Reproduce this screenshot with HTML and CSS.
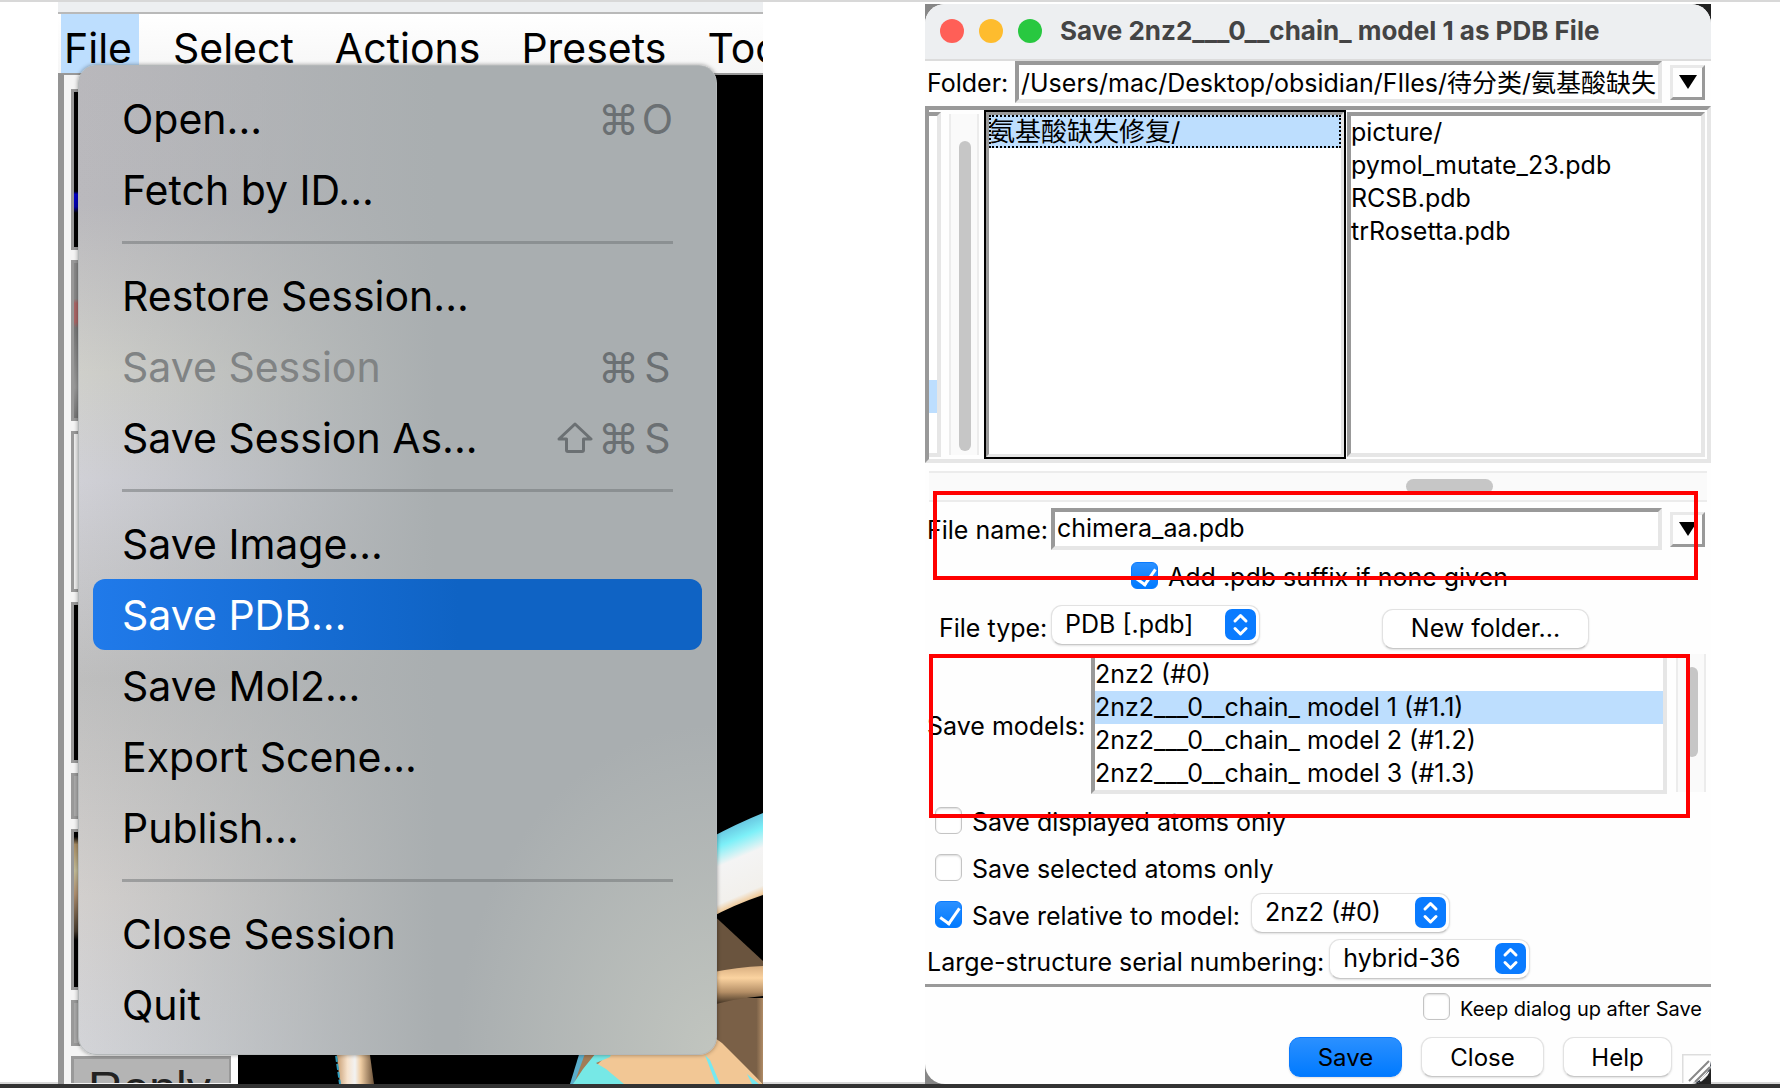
FILE: index.html
```html
<!DOCTYPE html>
<html lang="en">
<head>
<meta charset="utf-8">
<title>Save PDB</title>
<link rel="stylesheet" href="styles.css">
</head>
<body>
<main class="board">
  <section class="viewer">
    <div class="viewer-title"></div>
    <nav class="menubar">
      <button class="menubar-item is-open" type="button">File</button>
      <button class="menubar-item" type="button">Select</button>
      <button class="menubar-item" type="button">Actions</button>
      <button class="menubar-item" type="button">Presets</button>
      <button class="menubar-item" type="button">Tools</button>
    </nav>
    <div class="viewer-body">
      <div class="thumbs">
        <div class="thumb tall dark dot-blue"></div>
        <div class="thumb tall grey"></div>
        <div class="thumb tall pale"></div>
        <div class="thumb tall dark"></div>
        <div class="thumb short"></div>
        <div class="thumb tall bone"></div>
        <div class="thumb short"></div>
        <div class="thumb reply">Reply</div>
      </div>
      <div class="viewport">
        <svg viewBox="0 0 525 1011" preserveAspectRatio="xMaxYMax slice" aria-hidden="true">
          <defs>
            <linearGradient id="ribbon" gradientUnits="userSpaceOnUse" x1="480" y1="752" x2="516" y2="836">
              <stop offset="0" stop-color="#5fb4d6"/><stop offset=".22" stop-color="#7df0f8"/>
              <stop offset=".42" stop-color="#f4f4f4"/><stop offset=".8" stop-color="#f2f0ec"/>
              <stop offset=".88" stop-color="#f0cda0"/><stop offset="1" stop-color="#4a3a28"/>
            </linearGradient>
            <linearGradient id="strand" x1="0" y1="0" x2="0" y2="1">
              <stop offset="0" stop-color="#d8ae80"/><stop offset=".3" stop-color="#fbd3a0"/>
              <stop offset=".65" stop-color="#b58f66"/><stop offset="1" stop-color="#2e2318"/>
            </linearGradient>
            <linearGradient id="stick" x1="0" y1="0" x2="1" y2="0">
              <stop offset="0" stop-color="#c29669"/><stop offset=".3" stop-color="#f6e2cc"/>
              <stop offset=".5" stop-color="#f2f2f2"/><stop offset=".65" stop-color="#efcda3"/>
              <stop offset="1" stop-color="#6d533a"/>
            </linearGradient>
            <linearGradient id="fold" x1="0" y1="0" x2="1" y2="0">
              <stop offset=".88" stop-color="#7a6047"/><stop offset="1" stop-color="#b08c66"/>
            </linearGradient>
          </defs>
          <rect width="525" height="1011" fill="#000"/>
          <path d="M470 766Q500 750 525 740V822Q495 832 470 846Z" fill="url(#ribbon)"/>
          <path d="M470 837L525 888V911H470Z" fill="#6a543e"/>
          <path d="M470 925H525V1011L470 958Z" fill="url(#fold)"/>
          <path d="M470 900Q500 894 525 893V923Q500 925 470 933Z" fill="url(#strand)"/>
          <path d="M346 975H470V960L484 970L525 1011H334Z" fill="#f2c795"/>
          <path d="M344 975H376L346 1005L334 1011Z" fill="#a27b55"/>
          <path d="M343 975H349L336 1011H332Z" fill="#5aaecb"/>
          <path d="M362 975H375L372 984L358 990L368 996L386 1011H335L345 996Z" fill="#76e8e6"/>
          <path d="M467 982L472 987L482 1011H478Z M509 1001L521 1011H514Z" fill="#76e8f0"/>
          <path d="M98 975H131L136 1011H102Z" fill="url(#stick)"/>
          <path d="M97 975L102 1011" stroke="#2f9fc0" stroke-width="2" stroke-dasharray="6 2"/>
        </svg>
      </div>
    </div>
    <div class="popup" role="menu">
      <button class="item" role="menuitem" type="button"><span>Open...</span><kbd><i>⌘</i><i>O</i></kbd></button>
      <button class="item" role="menuitem" type="button"><span>Fetch by ID...</span></button>
      <hr>
      <button class="item" role="menuitem" type="button"><span>Restore Session...</span></button>
      <button class="item" role="menuitem" type="button" disabled><span>Save Session</span><kbd><i>⌘</i><i>S</i></kbd></button>
      <button class="item" role="menuitem" type="button"><span>Save Session As...</span><kbd><svg class="shift" viewBox="0 0 36 32" role="img" aria-label="Shift"><path d="M18 2L34 17H26.500V28Q26.500 29.500 25 29.500H11Q9.500 29.500 9.500 28V17H2Z"/></svg><i>⌘</i><i>S</i></kbd></button>
      <hr>
      <button class="item" role="menuitem" type="button"><span>Save Image...</span></button>
      <button class="item is-active" role="menuitem" type="button"><span>Save PDB...</span></button>
      <button class="item" role="menuitem" type="button"><span>Save Mol2...</span></button>
      <button class="item" role="menuitem" type="button"><span>Export Scene...</span></button>
      <button class="item" role="menuitem" type="button"><span>Publish...</span></button>
      <hr>
      <button class="item" role="menuitem" type="button"><span>Close Session</span></button>
      <button class="item" role="menuitem" type="button"><span>Quit</span></button>
    </div>
  </section>

  <section class="backdrop">
    <form class="dialog">
      <header class="titlebar">
        <span class="light red"></span><span class="light amber"></span><span class="light green"></span>
        <h1>Save 2nz2___0__chain_ model 1 as PDB File</h1>
      </header>

      <div class="entry-row folder-row">
        <label for="folder">Folder:</label>
        <input id="folder" class="entry" type="text" value="/Users/mac/Desktop/obsidian/FIles/待分类/氨基酸缺失">
        <button class="drop" type="button" aria-label="Recent folders"><svg viewBox="0 0 18 14"><path d="M0 0H18L9 14Z"/></svg></button>
      </div>

      <div class="browser">
        <div class="pane parent"><div class="parent-row"></div></div>
        <div class="vscroll"><div class="thumb-bar"></div></div>
        <ul class="pane current"><li class="focus-row">氨基酸缺失修复/</li></ul>
        <ul class="pane files"><li>picture/</li><li>pymol_mutate_23.pdb</li><li>RCSB.pdb</li><li>trRosetta.pdb</li></ul>
      </div>
      <div class="hscroll"><div class="thumb-bar"></div></div>

      <div class="entry-row name-row">
        <label for="name">File name:</label>
        <input id="name" class="entry" type="text" value="chimera_aa.pdb">
        <button class="drop" type="button" aria-label="Recent names"><svg viewBox="0 0 18 14"><path d="M0 0H18L9 14Z"/></svg></button>
      </div>

      <label class="check suffix"><input type="checkbox" checked>Add .pdb suffix if none given</label>

      <div class="type-row">
        <label for="type">File type:</label>
        <span class="combo w-type"><select id="type"><option>PDB [.pdb]</option></select>
          <svg viewBox="0 0 31 31"><rect width="31" height="31" rx="7" fill="#0a7bff"/><path d="M10 12L15.500 6.500L21 12M10 19.500L15.500 25L21 19.500"/></svg></span>
        <button class="push new-folder" type="button">New folder...</button>
      </div>

      <div class="models-row">
        <span id="models-label">Save models:</span>
        <ul class="models" aria-labelledby="models-label">
          <li>2nz2 (#0)</li>
          <li class="selected">2nz2___0__chain_ model 1 (#1.1)</li>
          <li>2nz2___0__chain_ model 2 (#1.2)</li>
          <li>2nz2___0__chain_ model 3 (#1.3)</li>
        </ul>
        <div class="vscroll"><div class="thumb-bar"></div></div>
      </div>

      <div class="options">
        <label class="check"><input type="checkbox">Save displayed atoms only</label>
        <label class="check"><input type="checkbox">Save selected atoms only</label>
        <div class="option-line">
          <label class="check"><input type="checkbox" checked>Save relative to model:</label>
          <span class="combo w-model"><select aria-label="Relative model"><option>2nz2 (#0)</option></select>
            <svg viewBox="0 0 31 31"><rect width="31" height="31" rx="7" fill="#0a7bff"/><path d="M10 12L15.500 6.500L21 12M10 19.500L15.500 25L21 19.500"/></svg></span>
        </div>
      </div>
      <div class="serial-row">
        <label for="serial">Large-structure serial numbering:</label>
        <span class="combo w-serial"><select id="serial"><option>hybrid-36</option></select>
          <svg viewBox="0 0 31 31"><rect width="31" height="31" rx="7" fill="#0a7bff"/><path d="M10 12L15.500 6.500L21 12M10 19.500L15.500 25L21 19.500"/></svg></span>
      </div>

      <footer class="foot">
        <label class="check keep"><input type="checkbox">Keep dialog up after Save</label>
        <div class="actions">
          <button class="push primary w-save" type="button">Save</button>
          <button class="push w-close" type="button">Close</button>
          <button class="push w-help" type="button">Help</button>
          <svg class="grip" viewBox="0 0 29 29" aria-hidden="true"><path d="M29 7A26 26 0 0 1 11 29H29Z" fill="#222a36"/><path d="M0 29V0H29" fill="none" stroke="#ddd" stroke-width="3"/><path d="M6 27L27 6M12 28L28 12M19 28L28 19" stroke="#fff" stroke-width="4"/><path d="M7 27L27 7M13 28L28 13M20 28L28 20" stroke="#888" stroke-width="2"/></svg>
        </div>
      </footer>
    </form>
    <div class="mark mark-name"></div>
    <div class="mark mark-models"></div>
  </section>
</main>
<div class="page-edge"></div>
</body>
</html>
```
FILE: styles.css
```css
* { box-sizing: border-box; }

body {
  margin: 0;
  min-height: 100vh;
  display: flex;
  flex-direction: column;
  background: #fff;
  color: #000;
  font-family: Inter, "Noto Sans CJK SC", sans-serif;
  font-size: 25px;
  line-height: 33px;
}
button, input, select { font: inherit; color: inherit; }
button { border: 0; background: none; padding: 0; }
ul { list-style: none; margin: 0; padding: 0; }

.board {
  flex: 1;
  display: grid;
  grid-template-columns: 705fr 786fr;
  column-gap: 162px;
  padding: 0 69px 0 58px;
  border-top: 2px solid #d8d8d8;
  border-bottom: 2px solid #d8d8d8;
}
.page-edge { flex: none; height: 4px; background: #333; position: relative; }

/* Viewer window */
.viewer {
  position: relative;
  display: flex;
  flex-direction: column;
  overflow: hidden;
  margin-bottom: -2px;
  background: #fff;
}
.viewer-title { height: 12px; background: #edeff1; border-bottom: 2px solid #b9b9b9; }
.menubar {
  display: flex;
  gap: 31px;
  height: 59px;
  padding-left: 3px;
  background: linear-gradient(#fff, #f6f6f6);
}
.menubar-item {
  flex: none;
  padding: 9px 7px 0 3px;
  font-size: 41px;
  line-height: 50px;
}
.menubar-item.is-open { background: #bddefe; }
.viewer-body {
  flex: 1;
  display: flex;
  gap: 7px;
  border-left: 6px solid #949494;
  border-top: 2px solid #999;
}
.thumbs {
  width: 167px;
  padding: 14px 0 0 7px;
  display: flex;
  flex-direction: column;
  gap: 10px;
  background: #f4f4f4;
}
.thumb { border: 3px solid #999; border-right-width: 2px; }
.tall { height: 161px; }
.short { height: 46px; background: #aaa; }
.dark { background: #000; }
.dot-blue { background: linear-gradient(#000 64%, #00c 66%, #00a 74%, #000 78%); }
.grey { background: linear-gradient(#888 23%, #a66 26%, #a66 38%, #797979 42%, #999 80%, #777); }
.pale { background: #eee; }
.bone { background: linear-gradient(#000 3%, #a98d64 8%, #c4bd98 25%, #b09070 40%, #463a2c 64%, #000 70%); }
.reply {
  height: 27px;
  padding: 3px 14px;
  overflow: hidden;
  border-bottom: 0;
  background: #b4b4b4;
  color: #222;
  font-family: "Liberation Sans", sans-serif;
  font-size: 48px;
  line-height: 54px;
}
.viewport { flex: 1; position: relative; background: #000; }
.viewport svg { position: absolute; inset: 0; width: 100%; height: 100%; }

.popup {
  position: absolute;
  left: 20px;
  top: 63px;
  width: 639px;
  padding: 17px 14px 14px;
  border-radius: 18px;
  border: 1px solid #b4b8b9;
  background:
    radial-gradient(ellipse 260px 330px at 100% 100%, #c1c5bf, transparent),
    linear-gradient(to right, transparent, #a9aeb0 56%),
    linear-gradient(#b9b8bc 0, #bab9bd 14%, #cfcfca 31%, #d0d0d6 42%, #bebebe 62%, #d2cfcd 84%, #d3d4d8 100%);
  box-shadow: 0 0 4px rgba(0, 0, 0, .4);
}
.popup hr { height: 3px; margin: 16px 29px; border: 0; background: rgba(110, 114, 116, .5); }
.item {
  display: flex;
  justify-content: space-between;
  align-items: center;
  width: 100%;
  height: 71px;
  padding: 0 29px;
  border-radius: 12px;
  font-size: 41px;
  line-height: 50px;
}
.item:disabled { color: #808384; }
.item.is-active { color: #fff; background: linear-gradient(to right, #207aea, #0f63c4 60%); }
.item kbd { display: flex; align-items: center; gap: 8px; color: #6b7073; font: inherit; }
.item kbd i { width: 31px; font-style: normal; display: flex; justify-content: center; }
.shift { width: 36px; height: 32px; margin-right: 2px; fill: none; stroke: #6b7073; stroke-width: 3; stroke-linejoin: round; }

/* Save dialog */
.backdrop {
  position: relative;
  margin: 2px 0 -2px;
  background: linear-gradient(to right, #888, #222 50%);
}
.dialog {
  display: flex;
  flex-direction: column;
  height: 100%;
  border-radius: 20px;
  overflow: hidden;
  background: #fefefe;
}
.titlebar {
  display: flex;
  align-items: center;
  gap: 15px;
  height: 57px;
  padding: 0 15px 2px;
  background: #edeff1;
  border-bottom: 2px solid #dcdcdc;
}
.light { width: 24px; height: 24px; border-radius: 50%; }
.red { background: #ff5f57; }
.amber { background: #febc2e; }
.green { background: #28c840; }
.titlebar h1 { margin: 0 0 0 3px; font-size: 26px; line-height: 33px; color: #444; white-space: nowrap; }

.entry-row { display: flex; align-items: center; padding: 0 6px 0 2px; }
.entry-row label { padding-top: 2px; }
.name-row { margin-top: 6px; }
.folder-row label { width: 88px; }
.name-row label { width: 124px; }
.entry {
  flex: 1;
  min-width: 0;
  height: 42px;
  padding: 0 0 2px 2px;
  border: 4px solid;
  border-color: #999 #e6e6e6 #e6e6e6 #999;
  background: #fff;
}
.drop {
  display: grid;
  place-items: center;
  width: 35px;
  height: 35px;
  margin-left: 8px;
  border: 3px solid;
  border-color: #e9e9e9 #999 #999 #e9e9e9;
}
.drop svg { width: 18px; height: 14px; }

.browser {
  display: flex;
  height: 357px;
  margin-top: 3px;
  border: 4px solid;
  border-color: #999 #e6e6e6 #e6e6e6 #999;
}
.pane { border: 4px solid; border-color: #999 #e6e6e6 #e6e6e6 #999; background: #fff; }
.parent { width: 12px; margin: 2px 8px 2px 0; padding-top: 264px; border-left: 0; }
.parent-row { height: 33px; background: #bddefe; }
.vscroll {
  width: 30px;
  padding: 0 6px 0 8px;
  border: 2px solid #ececec;
  border-width: 0 2px;
  background: #fafafa;
}
.thumb-bar { background: #c6c6c6; border-radius: 8px; }
.browser .vscroll { margin: 4px 5px 4px 0; padding-top: 27px; padding-bottom: 4px; }
.browser .thumb-bar { height: 100%; }
.current { flex: 361; outline: 2px solid #000; outline-offset: -1px; margin: 1px 2px 1px 1px; font-size: 26px; }
.files { flex: 359; margin: 2px 2px 2px 0; }
.focus-row { background: #bddefe; outline: 2px dotted #000; outline-offset: -2px; }
.hscroll {
  height: 31px;
  margin: 8px 4px 0;
  padding: 6px 214px 0 0;
  display: flex;
  justify-content: flex-end;
  border: 2px solid #ececec;
  border-width: 2px 0;
  background: #fafafa;
}
.hscroll .thumb-bar { width: 87px; height: 15px; }

.check { display: flex; align-items: center; gap: 10px; }
.check input {
  appearance: none;
  position: relative;
  width: 27px;
  height: 27px;
  margin: 0 0 5px;
  border: 1px solid #c4c4c4;
  border-radius: 6px;
  background: #fff;
  box-shadow: inset 0 1px 2px rgba(0, 0, 0, .15);
}
.check input:checked { border-color: #0a7bff; background: linear-gradient(#2b90ff, #007aff); box-shadow: none; }
.check input:checked::after {
  content: "";
  position: absolute;
  left: 8px;
  top: 2px;
  width: 9px;
  height: 17px;
  border: solid #fff;
  border-width: 0 3px 3px 0;
  transform: rotate(35deg);
}
.suffix { height: 45px; margin-top: 5px; padding-left: 206px; }

.combo { position: relative; display: flex; height: 40px; }
.combo select {
  appearance: none;
  width: 100%;
  padding: 0 0 1px 13px;
  border: 1px solid #e2e2e2;
  border-bottom-color: #c8c8c8;
  border-radius: 11px;
  background: #fff;
  box-shadow: 0 1px 2px rgba(0, 0, 0, .12);
}
.combo svg {
  position: absolute;
  right: 4px;
  top: 4px;
  width: 31px;
  height: 31px;
  fill: none;
  stroke: #fff;
  stroke-width: 3;
  stroke-linecap: round;
  stroke-linejoin: round;
  pointer-events: none;
}
.combo rect { stroke: none; }
.w-type { width: 209px; }
.w-model { width: 199px; }
.w-serial { width: 201px; }

.push {
  height: 40px;
  border: 1px solid #e2e2e2;
  border-bottom-color: #c8c8c8;
  border-radius: 11px;
  background: #fff;
  box-shadow: 0 1px 2px rgba(0, 0, 0, .12);
}
.primary { border-color: #0a7bff; background: linear-gradient(#2b90ff, #007aff); }
.type-row { display: flex; align-items: center; height: 54px; padding-left: 14px; }
.type-row label { width: 112px; padding-top: 2px; }
.type-row .w-type { margin-bottom: 5px; }
.new-folder { width: 207px; margin: 3px 0 0 122px; }

.models-row { display: flex; align-items: center; height: 140px; padding: 0 5px 0 2px; }
.models-row > span { width: 164px; padding-top: 5px; }
.models { flex: 1; align-self: stretch; padding-top: 4px; border: 4px solid; border-color: #999 #e6e6e6 #e6e6e6 #999; border-top: 0; background: #fff; }
.models .selected { background: #bddefe; }
.models-row .vscroll { align-self: stretch; margin: 0 0 2px 9px; padding-top: 13px; }
.models-row .thumb-bar { height: 90px; }

.options { display: flex; flex-direction: column; padding: 5px 0 0 10px; }
.options .check { height: 47px; }
.option-line { display: flex; }
.option-line .w-model { margin: 0 0 0 11px; }
.serial-row { display: flex; align-items: center; height: 44px; padding-left: 2px; }
.serial-row label { flex: none; }
.serial-row .w-serial { margin: 0 0 6px 5px; }

.foot { border-top: 3px solid #999; }
.keep { justify-content: flex-end; height: 44px; padding-right: 9px; font-size: 20px; }
.actions { display: flex; align-items: flex-start; justify-content: flex-end; gap: 19px; padding-top: 6px; font-size: 24px; }
.w-save { width: 113px; }
.w-close { width: 123px; }
.w-help { width: 109px; }
.grip { width: 29px; height: 29px; margin: 17px 0 0 -9px; }

.mark { position: absolute; border: 4px solid #f00; }
.mark-name { left: 8px; right: 13px; top: 487px; height: 89px; }
.mark-models { left: 4px; right: 21px; top: 650px; height: 164px; }
```
